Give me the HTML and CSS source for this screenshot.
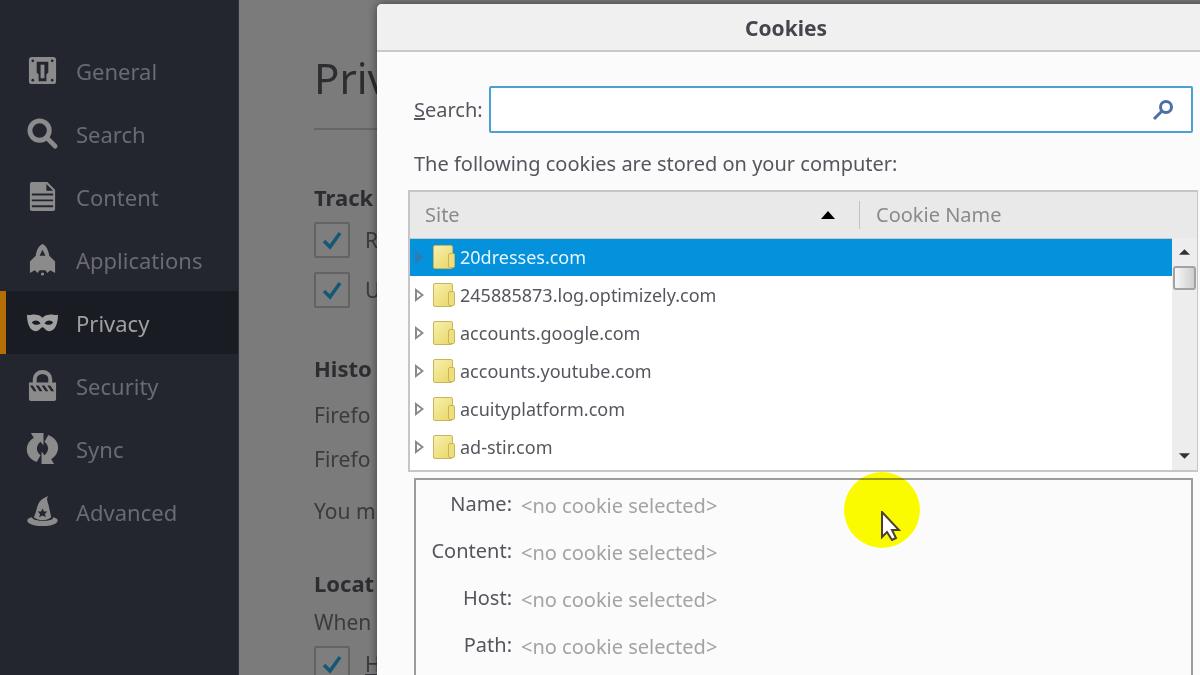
FILE: index.html
```
<!DOCTYPE html>
<html lang="en">
<head>
  <meta charset="UTF-8">
  <meta name="viewport" content="width=device-width, initial-scale=1.0">
  <title>Privacy</title>
  <link rel="stylesheet" href="styles.css">
</head>
<body>
  <nav class="sidebar">
    <a class="nav-item" href="#general">
      <svg viewBox="0 0 32 32"><path d="M5 2h22a3 3 0 0 1 3 3v22a3 3 0 0 1-3 3H5a3 3 0 0 1-3-3V5a3 3 0 0 1 3-3z"/><path class="hole" d="M10 7h12v11l-2 2v7h-8v-7l-2-2z"/><path d="M14 10h4v14h-4z"/><g class="hole"><circle cx="6" cy="6" r="1.4"/><circle cx="26" cy="6" r="1.4"/><circle cx="6" cy="26" r="1.4"/><circle cx="26" cy="26" r="1.4"/></g></svg>
      General
    </a>
    <a class="nav-item" href="#search">
      <svg viewBox="0 0 32 32"><circle cx="13" cy="13" r="10" class="line" stroke-width="5"/><path d="M20 20l9 9" class="line" stroke-width="5" stroke-linecap="round"/></svg>
      Search
    </a>
    <a class="nav-item" href="#content">
      <svg viewBox="0 0 32 32"><path d="M5 1h16l8 8v20a2 2 0 0 1-2 2H5a2 2 0 0 1-2-2V3a2 2 0 0 1 2-2z"/><path class="hole" d="M20 3v7h7zM5 13h22v2H5zM5 19h22v2H5zM5 25h22v2H5z"/></svg>
      Content
    </a>
    <a class="nav-item" href="#applications">
      <svg viewBox="0 0 32 32"><path fill-rule="evenodd" d="M16 0c4 2 6 6 7 12l6 6v12l-5-3-3 3-2-3h-6l-2 3-3-3-5 3V18l6-6c1-6 3-10 7-12zM16 6l-3 6h6z"/><circle cx="16" cy="31" r="1.6"/></svg>
      Applications
    </a>
    <a class="nav-item selected" href="#privacy">
      <svg viewBox="0 0 32 32"><path fill-rule="evenodd" d="M0 8c4 1 6-1 9 0 3 0 5 1 7 3 2-2 4-3 7-3 3-1 5 1 9 0 0 9-3 17-9 17-4 0-5-4-7-4s-3 4-7 4C3 25 0 17 0 8zM5 16c2 3 6 3 9 1-2-4-7-4-9-1zM27 16c-2 3-6 3-9 1 2-4 7-4 9-1z"/></svg>
      Privacy
    </a>
    <a class="nav-item" href="#security">
      <svg viewBox="0 0 32 32"><path d="M8 15V9a8 7 0 0 1 16 0v6" class="line" stroke-width="4"/><path d="M2 13h28v17a2 2 0 0 1-2 2H4a2 2 0 0 1-2-2z"/><path class="hole" d="M3 16h3l4 6H7zM9 16h3l4 6h-3zM15 16h3l4 6h-3zM21 16h3l4 6h-3z"/></svg>
      Security
    </a>
    <a class="nav-item" href="#sync">
      <svg viewBox="0 0 32 32"><path d="M4 0h13v13l-3-4c-5 4-5 10 0 14l-4 7C-3 25-3 11 7 5z"/><path transform="rotate(180 16 16)" d="M4 0h13v13l-3-4c-5 4-5 10 0 14l-4 7C-3 25-3 11 7 5z"/></svg>
      Sync
    </a>
    <a class="nav-item" href="#advanced">
      <svg viewBox="0 0 32 32"><path d="M22 0c-3 4 0 6 1 13l2 9c-5 4-13 4-18 0 3-6 3-12 6-16 2-3 5-4 9-6z"/><path d="M5 22c-5 1-6 4-3 6 6 4 22 4 28 0 3-2 2-5-3-6 1 5-21 5-22 0z"/><path class="hole" d="M16 13l1.500 3h3.500l-2.500 2.500 1 3.500-3.500-2-3.500 2 1-3.500L11 16h3.500z"/></svg>
      Advanced
    </a>
  </nav>

  <main class="pane">
    <h1>Priv</h1>

    <section>
      <h2>Track</h2>
      <label class="check"><input type="checkbox" checked> R</label>
      <label class="check"><input type="checkbox" checked> U</label>
    </section>

    <section class="history">
      <h2>Histo</h2>
      <p>Firefo</p>
      <p>Firefo</p>
      <p>You m</p>
    </section>

    <section class="location">
      <h2>Locat</h2>
      <p>When</p>
      <label class="check"><input type="checkbox" checked> <u>H</u></label>
    </section>
  </main>

  <div class="dialog" role="dialog" aria-labelledby="dialog-title">
    <header class="titlebar" id="dialog-title">Cookies</header>

    <div class="dialog-body">
      <div class="search-row">
        <label for="filter"><u>S</u>earch:</label>
        <div class="search-box">
          <input type="text" id="filter">
          <svg viewBox="0 0 22 22"><circle cx="14" cy="8" r="5.500"/><path d="M10 12l-8 8"/></svg>
        </div>
      </div>

      <p class="intro">The following cookies are stored on your computer:</p>

      <div class="tree">
        <table>
          <colgroup><col class="col-site"><col></colgroup>
          <thead>
            <tr>
              <th><div class="sort">Site <svg viewBox="0 0 14 8"><path d="M7 0l7 8H0z"/></svg></div></th>
              <th><div class="divided">Cookie Name</div></th>
            </tr>
          </thead>
          <tbody>
            <tr class="current"><td><div class="site"><i class="twisty"></i><i class="folder"></i>20dresses.com</div></td><td></td></tr>
            <tr><td><div class="site"><i class="twisty"></i><i class="folder"></i>245885873.log.optimizely.com</div></td><td></td></tr>
            <tr><td><div class="site"><i class="twisty"></i><i class="folder"></i>accounts.google.com</div></td><td></td></tr>
            <tr><td><div class="site"><i class="twisty"></i><i class="folder"></i>accounts.youtube.com</div></td><td></td></tr>
            <tr><td><div class="site"><i class="twisty"></i><i class="folder"></i>acuityplatform.com</div></td><td></td></tr>
            <tr><td><div class="site"><i class="twisty"></i><i class="folder"></i>ad-stir.com</div></td><td></td></tr>
          </tbody>
        </table>
        <div class="scrollbar">
          <button aria-label="Scroll up"><svg viewBox="0 0 12 6"><path d="M6 0l6 6H0z"/></svg></button>
          <div class="thumb"></div>
          <button class="down" aria-label="Scroll down"><svg viewBox="0 0 12 6"><path d="M0 0h12L6 6z"/></svg></button>
        </div>
      </div>

      <div class="details">
        <label for="name">Name:</label>
        <input type="text" id="name" value="&lt;no cookie selected&gt;" readonly>
        <label for="content">Content:</label>
        <input type="text" id="content" value="&lt;no cookie selected&gt;" readonly>
        <label for="host">Host:</label>
        <input type="text" id="host" value="&lt;no cookie selected&gt;" readonly>
        <label for="path">Path:</label>
        <input type="text" id="path" value="&lt;no cookie selected&gt;" readonly>
      </div>
    </div>
  </div>

  <div class="spot"></div>
  <svg class="pointer" viewBox="0 0 20 30"><path d="M1 1v25l5-5 5 8 4-2-4-8h7z"/></svg>
</body>
</html>
```

FILE: styles.css
```
* {
  box-sizing: border-box;
}

body {
  margin: 0;
  min-height: 100vh;
  display: flex;
  position: relative;
  overflow: hidden;
  font-family: "Noto Sans", "Open Sans", sans-serif;
  font-size: 20px;
  line-height: 28px;
  color: #2c2d31;
  background: #7b7b7b;
}

h1, h2, p {
  margin: 0;
}

/* Categories */
.sidebar {
  width: 239px;
  flex: none;
  padding-top: 39px;
  background: #24262f;
  border-right: 1px solid #30323a;
}

.nav-item {
  height: 63px;
  display: flex;
  align-items: center;
  gap: 18px;
  padding-left: 21px;
  border-left: 6px solid transparent;
  font-size: 22px;
  color: #696b70;
  text-decoration: none;
}

.nav-item svg {
  width: 31px;
  height: 31px;
  fill: #8b8b8c;
  overflow: visible;
}

.nav-item .line {
  fill: none;
  stroke: #8b8b8c;
}

.nav-item .hole {
  fill: #24262f;
}

.nav-item.selected {
  background: #1a1c23;
  border-left-color: #b56e04;
  color: #a0a0a1;
}

.nav-item.selected svg {
  fill: #a0a0a1;
}

/* Preferences behind the dialog */
.pane {
  flex: 1;
  height: 100vh;
  overflow: hidden;
  padding: 48px 40px 0 75px;
}

.pane p,
.check {
  font-size: 21px;
  color: #3a3b3f;
}

h1 {
  height: 82px;
  line-height: 60px;
  font-size: 42px;
  font-weight: 400;
  border-bottom: 2px solid #666;
  margin-bottom: 52px;
}

h2 {
  font-size: 22px;
  line-height: 30px;
}

.check {
  display: flex;
  align-items: center;
  gap: 15px;
  height: 35px;
  margin: 10px 0 15px;
}

.check + .check {
  margin-top: 0;
}

.check input {
  appearance: none;
  width: 36px;
  height: 36px;
  margin: 0;
  flex: none;
  border: 2px solid #636363;
  border-radius: 2px;
  background: #7e7e7e url("data:image/svg+xml,%3Csvg xmlns='http://www.w3.org/2000/svg' viewBox='0 0 32 32'%3E%3Cpath d='M8 17l6 6 10-14' fill='none' stroke='%23175776' stroke-width='3.500'/%3E%3C/svg%3E");
}

.history {
  margin-top: 46px;
}

.history p {
  margin-top: 16px;
}

.history h2 + p {
  margin-top: 18px;
}

.history p:last-child {
  margin-top: 24px;
}

.location {
  margin-top: 43px;
}

.location p {
  margin-top: 10px;
}

/* Cookies dialog */
.dialog {
  position: absolute;
  top: 4px;
  bottom: 0;
  left: 377px;
  right: -32px;
  display: flex;
  flex-direction: column;
  border-radius: 5px 5px 0 0;
  background: #fbfbfb;
  color: #55555d;
  box-shadow: 0 0 10px rgba(0, 0, 0, 0.5);
}

.titlebar {
  height: 48px;
  padding-right: 37px;
  border-bottom: 2px solid #c9c9c9;
  border-radius: 5px 5px 0 0;
  background: #f0f0f0;
  color: #45464d;
  font-size: 21px;
  font-weight: 700;
  line-height: 48px;
  text-align: center;
}

.dialog-body {
  flex: 1;
  display: flex;
  flex-direction: column;
  padding: 34px 34px 0 31px;
}

.search-row {
  display: flex;
  align-items: center;
  gap: 6px;
  padding: 0 5px 0 6px;
}

.search-box {
  flex: 1;
  height: 47px;
  display: flex;
  align-items: center;
  padding: 0 17px 0 8px;
  border: 2px solid #4aa0d4;
  border-radius: 2px;
  background: #fff;
}

.search-box input {
  flex: 1;
  border: 0;
  outline: 0;
  font: inherit;
}

.search-box svg {
  width: 22px;
  height: 22px;
  fill: none;
  stroke: #4b70a6;
  stroke-width: 3;
}

.intro {
  padding: 17px 0 12px 6px;
}

.tree {
  position: relative;
  height: 282px;
  flex: none;
  border: 2px solid #c6c6c6;
  border-right-width: 1px;
  background: #fff;
  overflow: hidden;
}

table {
  width: 100%;
  table-layout: fixed;
  border-collapse: collapse;
}

.col-site {
  width: 449px;
}

th {
  height: 46px;
  padding: 0;
  border-bottom: 1px solid #c6c6c6;
  background: #e9e9e9;
  color: #8a8a8a;
  font-weight: 400;
  text-align: left;
}

.sort {
  display: flex;
  align-items: center;
  justify-content: space-between;
  padding: 0 24px 0 15px;
}

.sort svg {
  width: 14px;
  height: 8px;
}

.divided {
  padding-left: 16px;
  border-left: 1px solid #c2c2c2;
}

td {
  height: 38px;
  padding: 0;
  font-size: 18px;
}

.current {
  background: #0492dd;
  color: #e6f6ff;
}

.site {
  display: flex;
  align-items: center;
  padding-left: 5px;
}

.twisty {
  width: 9px;
  height: 14px;
  margin-right: 9px;
  background: #8a8a8a;
  clip-path: polygon(evenodd, 0 0, 100% 50%, 0 100%, 0 0, 2px 4px, 2px 10px, 6px 7px, 2px 4px);
}

.current .twisty {
  background: #2a7eb5;
  clip-path: polygon(0 0, 100% 50%, 0 100%);
}

.folder {
  width: 20px;
  height: 24px;
  margin-right: 7px;
  border: 1px solid #c8b75a;
  border-radius: 2px;
  background: linear-gradient(135deg, #f8efae, #e9d766);
  position: relative;
}

.folder::after {
  content: '';
  position: absolute;
  right: -3px;
  bottom: 0;
  width: 5px;
  height: 13px;
  border: 1px solid #c8b75a;
  border-radius: 2px;
  background: #eedf7c;
}

.scrollbar {
  position: absolute;
  top: 46px;
  right: 0;
  bottom: 0;
  width: 25px;
  display: flex;
  flex-direction: column;
  align-items: center;
  background: #ededed;
}

.scrollbar button {
  width: 100%;
  height: 28px;
  padding: 0;
  border: 0;
  background: none;
  line-height: 0;
}

.scrollbar button svg {
  width: 11px;
  height: 6px;
  fill: #333;
}

.scrollbar .down {
  margin-top: auto;
}

.thumb {
  width: 23px;
  height: 24px;
  border: 2px solid #a3a3a3;
  border-radius: 3px;
  background: linear-gradient(to right, #f6f6f6, #cfcfcf);
}

.details {
  flex: 1;
  display: grid;
  grid-template-columns: 96px 1fr;
  grid-auto-rows: 47px;
  column-gap: 9px;
  margin: 6px 5px 0 6px;
  border: 2px solid #9c9c9c;
  border-bottom: 0;
}

.details label {
  line-height: 48px;
  text-align: right;
}

.details input {
  width: 100%;
  height: 50px;
  padding: 0;
  border: 0;
  outline: 0;
  background: none;
  font: inherit;
  color: #a3a3a3;
}

/* Click highlight and pointer */
.spot {
  position: absolute;
  top: 472px;
  left: 844px;
  width: 76px;
  height: 76px;
  border-radius: 50%;
  background: #ffff00;
  mix-blend-mode: multiply;
}

.pointer {
  position: absolute;
  top: 511px;
  left: 881px;
  width: 20px;
  height: 30px;
  fill: #fff;
  stroke: #4a4030;
  stroke-width: 2;
}
```
